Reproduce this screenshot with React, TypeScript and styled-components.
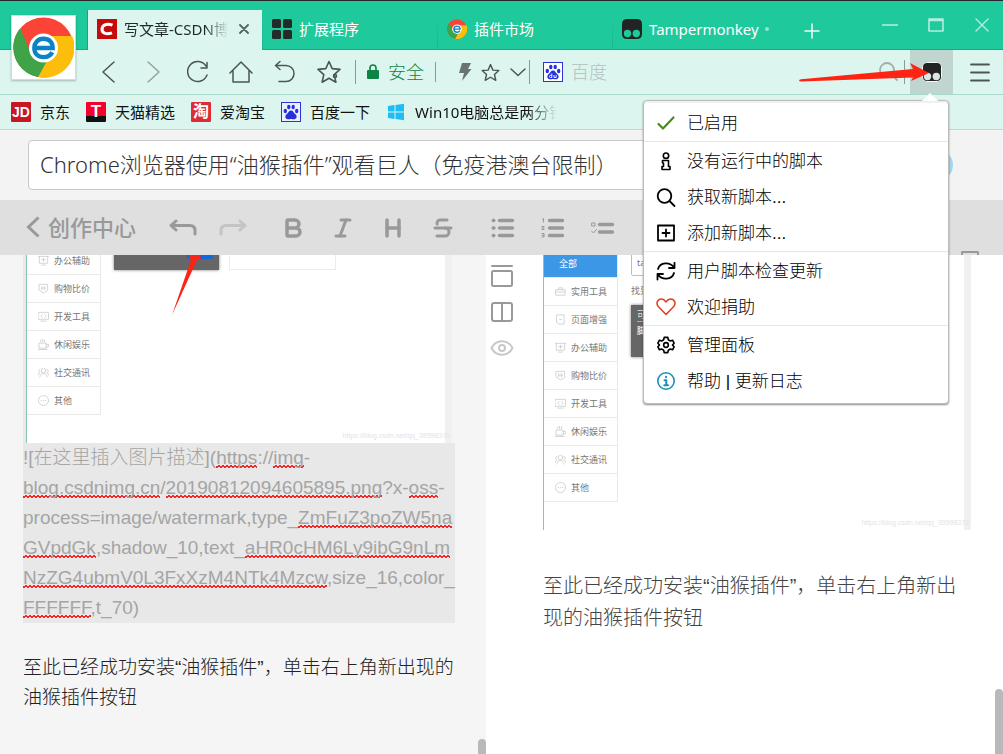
import React from 'react';
import styled, { createGlobalStyle, css } from 'styled-components';
import { Bold, Heading, Italic, Strikethrough } from 'lucide-react';

const GlobalStyle = createGlobalStyle`
  *, *::before, *::after { box-sizing: border-box; }
  body { margin: 0; font-family: "Noto Sans", "Noto Sans CJK SC", sans-serif; color: #111; background: #fff; }
  button { border: 0; padding: 0; background: none; color: inherit; font: inherit; cursor: pointer; }
  a { color: inherit; text-decoration: none; }
  p { margin: 0; }
  svg { display: block; flex: none; }
`;

/* ---------- browser frame ---------- */

const Page = styled.div`
  display: flex;
  flex-direction: column;
  min-height: 100vh;
  border-top: 1px solid #26282c;
  overflow: hidden;
`;

const Frame = styled.header`
  position: relative;
  z-index: 2;
`;

const Logo = styled.div`
  position: absolute;
  z-index: 1;
  left: 11px;
  top: 14px;
  padding: 1px;
  background: #fff;
  border: 1px solid #d3dedb;
  box-shadow: 0 1px 2px rgba(0, 0, 0, 0.25);
`;

const TabBar = styled.nav`
  display: flex;
  height: 49px;
  padding-left: 87px;
  background: #1ec99c;
  border-bottom: 1px solid #16a982;
`;

const Tab = styled.a<{ $active?: boolean }>`
  display: flex;
  align-items: center;
  gap: 7px;
  width: 175px;
  padding: 0 13px 2px 9px;
  margin-top: 9px;
  margin-bottom: -1px;
  font-size: 15px;
  line-height: 20px;
  white-space: nowrap;
  color: ${(p) => (p.$active ? '#1f2a27' : '#fff')};
  background: ${(p) => (p.$active ? '#dcf6ef' : 'transparent')};
  border-left: 1px solid ${(p) => (p.$active ? '#1aa37f' : 'transparent')};
  & + & { border-image: linear-gradient(transparent 20%, #18b48b) 1; border-width: 0 0 0 1px; border-style: solid; }
  & + &:nth-child(2) { border-image: none; border-color: transparent; }
`;

const Faded = styled.span<{ $width: number }>`
  width: ${(p) => p.$width}px;
  overflow: hidden;
  white-space: nowrap;
  mask-image: linear-gradient(to right, #000 78%, transparent);
`;

const TabClose = styled.button`
  display: flex;
  margin-left: auto;
  color: #53635e;
`;

const LoadDot = styled.i`
  width: 4px;
  height: 4px;
  margin-left: -1px;
  border-radius: 50%;
  background: #8fe5cd;
`;

const NewTab = styled.button`
  display: flex;
  align-items: center;
  justify-content: center;
  width: 50px;
  padding-top: 11px;
  color: #e9fbf6;
`;

const WindowControls = styled.div`
  display: flex;
  margin-left: auto;
`;

const WindowButton = styled.button`
  display: flex;
  align-items: center;
  justify-content: center;
  width: 46px;
  padding-left: 3px;
  color: #b4eedd;
`;

const NavBar = styled.div`
  display: flex;
  align-items: center;
  height: 45px;
  padding-left: 87px;
  background: #dcf6ef;
  border-bottom: 1px solid #a9d9cb;
`;

const NavGroup = styled.div`
  display: flex;
  padding-right: 4px;
`;

const NavButton = styled.button<{ $width?: number; $inset?: number }>`
  display: flex;
  align-items: center;
  justify-content: center;
  width: ${(p) => p.$width ?? 44}px;
  height: 44px;
  padding-left: ${(p) => p.$inset ?? 0}px;
  color: #4b5653;
  &:disabled { color: #93a39e; }
`;

const Divider = styled.i<{ $short?: boolean }>`
  width: 1px;
  height: ${(p) => (p.$short ? 20 : 24)}px;
  background: #8b9a95;
`;

const Security = styled.button`
  display: flex;
  align-items: center;
  justify-content: center;
  gap: 9px;
  width: 79px;
  color: #0d8345;
  font-size: 18px;
  font-weight: 300;
  line-height: 24px;
`;

const Search = styled.label`
  display: flex;
  flex: 1;
  align-items: center;
  gap: 8px;
  min-width: 0;
  padding: 0 6px 0 13px;
  color: #a3aeab;
`;

const SearchInput = styled.input`
  flex: 1;
  min-width: 0;
  padding: 0;
  border: 0;
  outline: 0;
  background: transparent;
  font: 300 18px/24px "Noto Sans", "Noto Sans CJK SC", sans-serif;
  &::placeholder { color: #b3bfbc; opacity: 1; }
`;

const Extension = styled.div`
  position: relative;
  margin-left: 5px;
  background: #c0d5cf;
`;

const PointerArrow = styled.svg`
  position: absolute;
  z-index: 4;
  right: 14px;
  top: 12px;
  pointer-events: none;
`;

const BookmarkBar = styled.nav`
  display: flex;
  align-items: center;
  gap: 16px;
  height: 35px;
  padding-left: 11px;
  background: #dcf6ef;
  border-bottom: 1px solid #b3ddd0;
`;

const Bookmark = styled.a`
  display: flex;
  align-items: center;
  gap: 9px;
  font-size: 15px;
  line-height: 20px;
  white-space: nowrap;
`;

const SiteBadge = styled.span<{ $bg: string; $size: number }>`
  display: flex;
  align-items: center;
  justify-content: center;
  width: 20px;
  height: 20px;
  border-radius: 1px;
  background: ${(p) => p.$bg};
  color: #fff;
  font: bold ${(p) => p.$size}px/20px "Liberation Sans", "Noto Sans CJK SC", sans-serif;
`;

/* ---------- extension menu ---------- */

const Menu = styled.div`
  position: absolute;
  z-index: 3;
  top: 50px;
  right: 4px;
  width: 306px;
  padding: 4px 0;
  background: #fff;
  border: 1px solid #bcbcbc;
  border-radius: 4px;
  box-shadow: 0 1px 2px rgba(0, 0, 0, 0.45), inset 0 2px 0 #f1f1f1;
  &::before {
    content: "";
    position: absolute;
    top: -8px;
    right: 10px;
    border: solid transparent;
    border-width: 0 8px 8px;
    border-bottom-color: #fff;
  }
`;

const MenuGroup = styled.div`
  & + & { padding-top: 1px; border-top: 1px solid #e6e6e6; }
`;

const MenuItem = styled.button`
  display: flex;
  align-items: center;
  gap: 11px;
  width: 100%;
  height: 36px;
  padding: 1px 0 0 12px;
  font: 300 17px/24px "Liberation Sans", "Noto Sans CJK SC", sans-serif;
  color: #000;
`;

/* ---------- article editor ---------- */

const TitleBar = styled.div`
  display: flex;
  align-items: center;
  height: 70px;
  padding: 0 50px 0 28px;
  background: #f3f3f3;
`;

const TitleInput = styled.input`
  flex: 1;
  min-width: 0;
  height: 50px;
  margin-right: 80px;
  padding: 0 11px 4px;
  border: 1px solid #c8c8c8;
  border-radius: 4px;
  outline: 0;
  background: #fff;
  color: #333;
  font: 300 22px/32px "Noto Sans", "Noto Sans CJK SC", sans-serif;
`;

const Avatar = styled.i`
  width: 32px;
  height: 32px;
  border-radius: 50%;
  background: #9fd8ef;
`;

const Toolbar = styled.div`
  display: flex;
  align-items: center;
  height: 55px;
  padding: 0 24px 0 26px;
  background: #dfdfdf;
  color: #999;
`;

const BackLink = styled.a`
  display: flex;
  align-items: center;
  gap: 8px;
  width: 132px;
  padding-bottom: 2px;
  font-size: 22px;
  font-weight: 500;
  line-height: 32px;
  white-space: nowrap;
`;

const ToolGroup = styled.div`
  display: flex;
  margin-right: 10px;
`;

const Tool = styled.button`
  display: flex;
  align-items: center;
  justify-content: center;
  width: 50px;
  height: 50px;
  &:disabled { color: #c4c4c4; }
`;

const PanelTab = styled.i`
  align-self: flex-end;
  width: 18px;
  height: 4px;
  margin-left: auto;
  border: 2px solid #999;
  border-bottom: 0;
  border-radius: 2px 2px 0 0;
`;

const Workspace = styled.main`
  display: grid;
  flex: 1;
  grid-template-columns: 486fr 517fr;
`;

const Pane = styled.section<{ $source?: boolean }>`
  position: relative;
  min-width: 0;
  ${(p) => p.$source ? css`
    padding-left: 23px;
    background: #f5f5f5;
  ` : css`
    display: flex;
    gap: 25px;
    padding-right: 32px;
    background: #fff;
  `}
`;

const ScrollThumb = styled.i<{ $height: number }>`
  position: absolute;
  right: 0;
  bottom: 0;
  width: 8px;
  height: ${(p) => p.$height}px;
  border-radius: 4px 4px 0 0;
  background: #b9b9b9;
`;

const SourceImage = styled.div`
  max-width: 429px;
  padding-left: 3px;
  background: #e8e8e8;
`;

const Markup = styled.p`
  width: max-content;
  background: #e8e8e8;
  color: #a5a5a5;
  font: 300 19px/30px "Liberation Sans", "Noto Sans CJK SC", sans-serif;
`;

const Line = styled.span`
  display: block;
  height: 30px;
  white-space: nowrap;
`;

const Misspelt = styled.span`
  background-image:
    linear-gradient(to right, #ee2a2a 50%, transparent 50%),
    linear-gradient(to right, transparent 50%, #ee2a2a 50%);
  background-size: 4px 2px;
  background-position: 0 100%, 0 calc(100% - 1px);
  background-repeat: repeat-x;
`;

const SourceText = styled.p`
  padding-top: 30px;
  color: #222;
  font: 300 19px/30px "Liberation Sans", "Noto Sans CJK SC", sans-serif;
`;

const SideTools = styled.div`
  display: flex;
  flex-direction: column;
  align-items: center;
  width: 32px;
  padding-top: 3px;
  color: #999;
`;

const SideButton = styled.button`
  display: flex;
  align-items: center;
  justify-content: center;
  width: 32px;
  height: 36px;
  &:last-child { color: #c8c8c8; }
`;

const Preview = styled.article`
  flex: 1;
  min-width: 0;
`;

const PreviewText = styled.p`
  padding-top: 40px;
  color: #444;
  font: 300 20px/32px "Liberation Sans", "Noto Sans CJK SC", sans-serif;
`;

/* ---------- picture of the script site ---------- */

const Shot = styled.div<{ $height: number }>`
  position: relative;
  display: flex;
  align-items: flex-end;
  height: ${(p) => p.$height}px;
  overflow: hidden;
  background: linear-gradient(to left, #f0f0f0 7px, #fff 7px);
  border-left: 1px solid #8cc4ae;
`;

const Categories = styled.ul`
  width: 74px;
  margin: 0 0 28px;
  padding: 0;
  list-style: none;
  border-right: 1px solid #e9e9e9;
`;

const Category = styled.li<{ $current?: boolean }>`
  display: flex;
  align-items: center;
  gap: 5px;
  height: 28px;
  padding-left: ${(p) => (p.$current ? 15 : 11)}px;
  border-bottom: 1px solid #e9e9e9;
  background: ${(p) => (p.$current ? '#3c97e6' : '#fff')};
  color: ${(p) => (p.$current ? '#fff' : '#777')};
  font-size: 9px;
  line-height: 12px;
  white-space: nowrap;
  svg { color: #ccc; }
`;

const Results = styled.div`
  display: flex;
  flex-direction: column;
  padding: 0 0 173px 13px;
  font-size: 9px;
  line-height: 18px;
  color: #777;
`;

const SiteSearch = styled.div`
  width: 180px;
  height: 26px;
  margin-bottom: 6px;
  padding: 4px 5px;
  border: 1px solid #94c8f3;
  border-radius: 2px;
  line-height: 16px;
`;

const Cards = styled.div`
  display: flex;
  gap: 10px;
  padding-top: 5px;
`;

const Card = styled.div<{ $dark?: boolean }>`
  display: flex;
  flex-direction: column;
  width: ${(p) => (p.$dark ? 105 : 107)}px;
  height: 52px;
  padding: 3px 5px 10px;
  line-height: 12px;
  color: #e0e0e0;
  background: ${(p) => (p.$dark ? '#666' : '#fff')};
  border: 1px solid ${(p) => (p.$dark ? '#666' : '#ececec')};
  box-shadow: ${(p) => (p.$dark ? '0 0 3px rgba(0,0,0,.5)' : 'none')};
`;

const CardTitle = styled.span`
  margin-bottom: 3px;
  border-bottom: 1px solid #aaa;
`;

const CardBar = styled.div`
  flex: none;
  align-self: flex-end;
  width: 26px;
  height: 10px;
  margin-top: auto;
  border-radius: 2px;
  background: #1467d8;
`;

const RedStroke = styled.svg`
  position: absolute;
  left: 143px;
  bottom: 127px;
`;

const Watermark = styled.span`
  position: absolute;
  right: 2px;
  bottom: 3px;
  color: #e4e4e4;
  font: 7px/9px "Liberation Sans", sans-serif;
`;

const Stroke = ({ size, box = size, w = 1, children }: { size: number; box?: number; w?: number; children: React.ReactNode }) => (
  <svg width={size} height={size} viewBox={`0 0 ${box} ${box}`} fill="none" stroke="currentColor" strokeWidth={w} strokeLinecap="round" strokeLinejoin="round" aria-hidden="true">
    {children}
  </svg>
);

const ChromeLogo = ({ size }: { size: number }) => (
  <svg width={size} height={size} viewBox="0 0 63 63" aria-hidden="true">
    <circle cx="31.5" cy="31.5" r="31" fill="#fb4338" />
    <path d="M61 19.500H31V32L44 38L26 62A31 31 0 0 0 61 19.500Z" fill="#fdbd0b" />
    <path d="M26 62L44 38L31 32L18 36L7.500 11.500A31 31 0 0 0 26 62Z" fill="#3fa447" />
    <path d="M26 62L38 40L45 38L33 61Z" fill="#fdbd0b" />
    <circle cx="31.5" cy="32" r="15" fill="#fff" />
    <path d="M21.500 32H41C41 25.500 37 22.500 31.500 22.500C25.500 22.500 22 27 22 32C22 38 26 41.500 31.500 41.500C36 41.500 39 39.500 40.500 36.500" fill="none" stroke="#0b84c6" strokeWidth="4.500" />
  </svg>
);

const BaiduPaw = ({ inverse }: { inverse?: boolean }) => (
  <svg width="20" height="20" viewBox="0 0 20 20" aria-hidden="true">
    <rect x=".5" y=".5" width="19" height="19" fill={inverse ? '#eef0ff' : '#fff'} stroke="#2a35dc" />
    <g fill="#2531dc">
      <ellipse cx="4.300" cy="9" rx="1.700" ry="2.200" />
      <ellipse cx="7.800" cy="5" rx="1.700" ry="2.300" />
      <ellipse cx="12.200" cy="5" rx="1.700" ry="2.300" />
      <ellipse cx="15.700" cy="9" rx="1.700" ry="2.200" />
      <path d="M10 8.500C7.800 8.500 7.500 10.700 5.800 12C3.500 13.900 4 17 6.800 17.200C8.300 17.300 8.800 16.900 10 16.900S11.700 17.300 13.200 17.200C16 17 16.500 13.900 14.200 12C12.500 10.700 12.200 8.500 10 8.500Z" />
    </g>
    {!inverse && <path d="M8.800 11.500V15.500H7.600A1.100 1.100 0 0 1 7.600 13.300H8.800M11 13V15.500H13.200V13" fill="none" stroke="#fff" strokeWidth=".9" />}
  </svg>
);

const Monkey = ({ eyes, outline }: { eyes: string; outline?: boolean }) => (
  <svg width="20" height="20" viewBox="0 0 20 20" aria-hidden="true">
    <rect x=".5" y=".5" width="19" height="19" rx="4" fill="#232323" stroke={outline ? '#f4f9f7' : '#232323'} />
    <circle cx="5.500" cy="14.500" r="3.700" fill={eyes} />
    <circle cx="14.300" cy="14.500" r="3.700" fill={eyes} />
  </svg>
);

const categories: { name: string; icon: React.ReactNode }[] = [
  { name: '实用工具', icon: <path d="M1 4H11V10H1ZM4 4V2H8V4M1 6.500H11" /> },
  { name: '页面增强', icon: <path d="M2 1H10V11H4L2 9ZM5 6H7" /> },
  { name: '办公辅助', icon: <path d="M.5 1.500H11.500M1.500 1.500V9H10.500V1.500M4 11H8M6 3.500V7M4 5H8" /> },
  { name: '购物比价', icon: <path d="M1.500 1.500H10.500V8L6 11L1.500 8ZM4 4V7.500M7 4V7.500M4 5.500H8.500" /> },
  { name: '开发工具', icon: <path d="M.5 1.500H11.500V9H.500ZM3 11H9M4.500 4L3 5.500L4.500 7M7.500 4L9 5.500L7.500 7" /> },
  { name: '休闲娱乐', icon: <path d="M1.500 4.500H9V10H1.500ZM9 6H11.500V8.500H9M0 11.500H10M3 1V3M5 0V3M7 1V3" /> },
  { name: '社交通讯', icon: <><circle cx="6" cy="4" r="2.500" /><path d="M2 11C2 5.500 10 5.500 10 11M2 2.500C0 3.500 1 6 2 6L0 9M10 2.500C12 3.500 11 6 10 6L12 9" /></> },
  { name: '其他', icon: <><circle cx="6" cy="6" r="5.500" /><path d="M3.500 6H4M6 6H6.200M8.200 6H8.500" /></> },
];

/* `scrolled` leaves out the rows that have moved above the upper edge */
const ScriptSite = ({ height, scrolled }: { height: number; scrolled?: boolean }) => (
  <Shot $height={height}>
    <Categories>
      {!scrolled && <Category $current>全部</Category>}
      {categories.slice(scrolled ? 2 : 0).map(({ name, icon }) => (
        <Category key={name}><Stroke size={11} box={12} w={0.9}>{icon}</Stroke>{name}</Category>
      ))}
    </Categories>
    <Results>
      {!scrolled && <SiteSearch>tamper</SiteSearch>}
      {!scrolled && <span>找到以下</span>}
      <Cards>
        <Card $dark>
          {!scrolled && <CardTitle>可以使用</CardTitle>}
          {!scrolled && <strong>脚本</strong>}
          <CardBar />
        </Card>
        <Card />
      </Cards>
    </Results>
    <RedStroke width="36" height="70" viewBox="0 0 36 70" aria-hidden="true">
      <path d="M2 69L21 14L19 10L29 0L31 14L27 14Z" fill="#fb2416" />
    </RedStroke>
    <Watermark>https://blog.csdn.net/qq_38598370</Watermark>
  </Shot>
);

const menuGroups: { label: string; icon: React.ReactNode }[][] = [
  [{ label: '已启用', icon: <g stroke="#4c8a1c"><path d="M2.500 10L7 14.500L17.500 3.500" strokeWidth="2.200" /></g> }],
  [
    { label: '没有运行中的脚本', icon: <g strokeWidth="1.600"><circle cx="10" cy="3.700" r="2.700" /><path d="M6.500 8.500H12.500V14.500H14V17.500H6V14.500H7.500V11H6.500Z" /></g> },
    { label: '获取新脚本...', icon: <><circle cx="8.500" cy="8" r="6.800" /><path d="M13.500 13L18.500 18" /></> },
    { label: '添加新脚本...', icon: <path d="M2 1.500H18V16.500H2ZM10 5.500V12.500M6.500 9H13.500" /> },
  ],
  [
    { label: '用户脚本检查更新', icon: <path d="M2 7C4 0 14 -.5 18 5.500M18.500 .8V6H13M18 11C16 18 6 18.500 2 12.500M1.500 17.500V12H7" /> },
    { label: '欢迎捐助', icon: <path stroke="#e23f22" strokeWidth="1.500" d="M10 16.500L2.500 8.700C-.5 5.500 1.500 1 5.500 1C8 1 9.200 2.800 10 4C10.800 2.800 12 1 14.500 1C18.500 1 20.500 5.500 17.500 8.700Z" /> },
  ],
  [
    { label: '管理面板', icon: <g transform="translate(1 0) scale(.9)"><circle cx="10" cy="10" r="2.600" /><path d="M8 1.500H12L12.600 4.200L14.800 5.500L17.300 4.700L19 8L17.200 10L19 12L17.300 15.300L14.800 14.500L12.600 15.800L12 18.500H8L7.400 15.800L5.200 14.500L2.700 15.300L1 12L2.800 10L1 8L2.700 4.700L5.200 5.500L7.400 4.200Z" /></g> },
    { label: '帮助 | 更新日志', icon: <g stroke="#1b8fb8"><circle cx="10" cy="9" r="8.200" strokeWidth="1.600" /><path d="M8.500 8.300H10.300V13M8.300 13.200H12M10 4.700V5.200" strokeWidth="2" /></g> },
  ],
];

const listRows = (marks: React.ReactNode, rows: number[]) => (
  <svg width="24" height="20" viewBox="0 0 24 20" fill="none" stroke="currentColor" strokeWidth="3.400" strokeLinecap="round" aria-hidden="true">
    {rows.map((y) => <path key={y} d={`M8.500 ${y}H21.500`} />)}
    <g strokeWidth="1">{marks}</g>
  </svg>
);

export default function App() {
  return (
    <Page>
      <GlobalStyle />
      <Frame>
        <Logo><ChromeLogo size={61} /></Logo>
        <TabBar>
          <Tab href="#write" $active>
            <svg width="20" height="20" viewBox="0 0 20 20" aria-hidden="true">
              <rect width="20" height="20" fill="#c60b0b" />
              <path d="M15.500 6.200C12 4.600 5.500 4.500 5 10C4.700 15 10.500 15.400 15 13.800" fill="none" stroke="#fff" strokeWidth="3" />
            </svg>
            <Faded $width={104}>写文章-CSDN博客</Faded>
            <TabClose aria-label="关闭标签页"><Stroke size={10} w={1.8}><path d="M1 1L9 9M9 1L1 9" /></Stroke></TabClose>
          </Tab>
          <Tab href="#extensions">
            <svg width="20" height="20" viewBox="0 0 20 20" fill="#232b29" aria-hidden="true">
              <rect width="9" height="9" rx="1.500" /><rect x="11" width="9" height="9" rx="1.500" />
              <rect y="11" width="9" height="9" rx="1.500" /><rect x="11" y="11" width="9" height="9" rx="1.500" />
            </svg>
            扩展程序
          </Tab>
          <Tab href="#market"><ChromeLogo size={20} />插件市场</Tab>
          <Tab href="#tampermonkey"><Monkey eyes="#1ec99c" />Tampermonkey<LoadDot /></Tab>
          <NewTab aria-label="新标签页"><Stroke size={16} w={1.6}><path d="M8 1V15M1 8H15" /></Stroke></NewTab>
          <WindowControls>
            <WindowButton aria-label="最小化"><Stroke size={16} w={1.4}><path d="M0 8H16" /></Stroke></WindowButton>
            <WindowButton aria-label="最大化"><Stroke size={16} w={1.6}><path d="M1 2H15V14H1ZM1 3.500H15" /></Stroke></WindowButton>
            <WindowButton aria-label="关闭"><Stroke size={16} w={1.4}><path d="M2 2L14 14M14 2L2 14" /></Stroke></WindowButton>
          </WindowControls>
        </TabBar>

        <NavBar>
          <NavGroup>
            <NavButton aria-label="后退"><Stroke size={24} w={1.5}><path d="M17 2L6 12L17 22" /></Stroke></NavButton>
            <NavButton aria-label="前进" disabled><Stroke size={24} w={1.5}><path d="M7 2L18 12L7 22" /></Stroke></NavButton>
            <NavButton aria-label="刷新"><Stroke size={24} w={1.5}><path d="M21 6A10 10 0 1 0 22 15M22 2.500V8H16" /></Stroke></NavButton>
            <NavButton aria-label="主页"><Stroke size={24} w={1.5}><path d="M1 13L12 2L23 13M4 11V22H20V11" /></Stroke></NavButton>
            <NavButton aria-label="撤销"><Stroke size={24} w={1.5}><path d="M7 1.500L2.500 5.500L7 9.500M2.500 5.500H13A8 8 0 0 1 13 21.500H6" /></Stroke></NavButton>
            <NavButton aria-label="收藏夹"><Stroke size={24} w={1.600}><path d="M12 1.500L15.200 8.600L23 9.400L17.200 14.600L18.900 22.200L12 18.300L5.100 22.200L6.800 14.600L1 9.400L8.800 8.600Z" /><circle cx="18" cy="16" r="1.500" /></Stroke></NavButton>
          </NavGroup>
          <Divider />
          <Security>
            <svg width="12" height="16" viewBox="0 0 12 16" aria-hidden="true">
              <rect y="6" width="12" height="9" rx="1" fill="currentColor" />
              <path d="M3 7V4A3 3 0 0 1 9 4V7" fill="none" stroke="currentColor" strokeWidth="1.600" />
            </svg>
            安全
          </Security>
          <Divider $short />
          <NavButton $width={42} $inset={16} aria-label="极速模式">
            <svg width="14" height="18" viewBox="0 0 14 18" fill="#69736f" aria-hidden="true"><path d="M4 0H13L10 6H13.500L4 18L6 10H1Z" /></svg>
          </NavButton>
          <NavButton $width={24} aria-label="收藏"><Stroke size={19} box={24} w={1.8}><path d="M12 2L15 9L22.500 9.500L17 14.500L18.700 21.800L12 18L5.300 21.800L7 14.500L1.500 9.500L9 9Z" /></Stroke></NavButton>
          <NavButton $width={27} $inset={4} aria-label="展开"><Stroke size={16} w={1.5}><path d="M1 5L8 11.500L15 5" /></Stroke></NavButton>
          <Divider />
          <Search>
            <BaiduPaw />
            <SearchInput placeholder="百度" aria-label="搜索" />
            <Stroke size={20} w={1.8}><circle cx="9" cy="8" r="7" /><path d="M14 13L19 18" /></Stroke>
          </Search>
          <Divider />
          <Extension>
            <NavButton $width={43} aria-label="Tampermonkey" aria-expanded="true"><Monkey eyes="#dbe6e2" outline /></NavButton>
            <PointerArrow width="140" height="22" viewBox="0 0 140 22" aria-hidden="true">
              <path d="M0 19Q0 17.500 2 17.200L114 7L111 1L130 11L112 19L114 15.500L2 19.500Z" fill="#fe2414" />
            </PointerArrow>
            <Menu role="menu">
              {menuGroups.map((group) => (
                <MenuGroup key={group[0].label}>
                  {group.map((item) => (
                    <MenuItem key={item.label} role="menuitem"><Stroke size={20} w={1.8}>{item.icon}</Stroke>{item.label}</MenuItem>
                  ))}
                </MenuGroup>
              ))}
            </Menu>
          </Extension>
          <NavButton $width={50} $inset={4} aria-label="菜单"><Stroke size={20} w={1.8}><path d="M1 2.500H19M1 10.500H19M1 18.500H19" /></Stroke></NavButton>
        </NavBar>

        <BookmarkBar>
          <Bookmark href="#jd"><SiteBadge $bg="#c81623" $size={14}>JD</SiteBadge>京东</Bookmark>
          <Bookmark href="#tmall"><SiteBadge $bg="linear-gradient(#f5002d 70%, #111 70%)" $size={17}>T</SiteBadge>天猫精选</Bookmark>
          <Bookmark href="#taobao"><SiteBadge $bg="#dc2c36" $size={16}>淘</SiteBadge>爱淘宝</Bookmark>
          <Bookmark href="#baidu"><BaiduPaw inverse />百度一下</Bookmark>
          <Bookmark href="#win10">
            <svg width="20" height="20" viewBox="0 0 20 20" fill="#1fbdf5" aria-hidden="true">
              <path d="M2 4L8.500 3V9.500H2ZM9.500 2.900L18 1.700V9.500H9.500ZM2 10.500H8.500V17L2 16ZM9.500 10.500H18V18.300L9.500 17.100Z" />
            </svg>
            <Faded $width={142}>Win10电脑总是两分钟</Faded>
          </Bookmark>
        </BookmarkBar>
      </Frame>

      <TitleBar>
        <TitleInput aria-label="文章标题" defaultValue="Chrome浏览器使用“油猴插件”观看巨人（免疫港澳台限制）" />
        <Avatar />
      </TitleBar>

      <Toolbar>
        <BackLink href="#creator">
          <svg width="14" height="22" viewBox="0 0 14 22" fill="none" stroke="currentColor" strokeWidth="3" aria-hidden="true"><path d="M12.500 1.500L2.500 11L12.500 20.500" /></svg>
          创作中心
        </BackLink>
        <ToolGroup>
          <Tool aria-label="撤销"><Stroke size={28} w={3}><path d="M7 7L2 11.500L7 16M3 11.500H21Q26 11.500 26 16.500V20" /></Stroke></Tool>
          <Tool aria-label="重做" disabled><Stroke size={28} w={3}><path d="M21 7L26 11.500L21 16M25 11.500H7Q2 11.500 2 16.500V20" /></Stroke></Tool>
        </ToolGroup>
        <ToolGroup>
          <Tool aria-label="加粗"><Bold size={24} strokeWidth={3.5} /></Tool>
          <Tool aria-label="斜体"><Italic size={24} strokeWidth={3} /></Tool>
          <Tool aria-label="标题"><Heading size={24} strokeWidth={3.5} /></Tool>
          <Tool aria-label="删除线"><Strikethrough size={24} strokeWidth={3} /></Tool>
        </ToolGroup>
        <ToolGroup>
          <Tool aria-label="无序列表">
            {listRows(<g fill="currentColor"><circle cx="2.500" cy="2.500" r="1.500" /><circle cx="2.500" cy="10" r="1.500" /><circle cx="2.500" cy="17.500" r="1.500" /></g>, [2.5, 10, 17.5])}
          </Tool>
          <Tool aria-label="有序列表">
            {listRows(<path d="M1.500 1.200L2.500 .5V4M1 8.500H3V10H1V11.500H3M1 15.500H3V19H1M1 17.200H3" />, [2.5, 10, 17.5])}
          </Tool>
          <Tool aria-label="任务列表">
            {listRows(<path d="M1 5H4V8H1ZM.5 13L2.500 15L5.500 11.500" />, [6.5, 14])}
          </Tool>
        </ToolGroup>
        <PanelTab />
      </Toolbar>

      <Workspace>
        <Pane $source>
          <SourceImage><ScriptSite height={188} scrolled /></SourceImage>
          <Markup>
            <Line>![在这里插入图片描述](<Misspelt>https</Misspelt>://<Misspelt>img</Misspelt>-</Line>
            <Line><Misspelt>blog.csdnimg.cn</Misspelt>/<Misspelt>20190812094605895.png</Misspelt>?x-<Misspelt>oss</Misspelt>-</Line>
            <Line>process=image/watermark,type_<Misspelt>ZmFuZ3poZW5na</Misspelt></Line>
            <Line><Misspelt>GVpdGk</Misspelt>,shadow_10,text_<Misspelt>aHR0cHM6Ly9ibG9nLm</Misspelt></Line>
            <Line><Misspelt>NzZG4ubmV0L3FxXzM4NTk4Mzcw</Misspelt>,size_16,color_</Line>
            <Line><Misspelt>FFFFFF</Misspelt>,t_70)</Line>
          </Markup>
          <SourceText>
            <Line>至此已经成功安装“油猴插件”，单击右上角新出现的</Line>
            <Line>油猴插件按钮</Line>
          </SourceText>
          <ScrollThumb $height={15} />
        </Pane>
        <Pane>
          <SideTools>
            <SideButton aria-label="仅编辑"><Stroke size={24} w={2}><path d="M2 2H22" /><rect x="2" y="7" width="20" height="15" rx="1.500" /></Stroke></SideButton>
            <SideButton aria-label="分栏"><Stroke size={24} w={2}><rect x="2" y="3" width="20" height="18" rx="2" /><path d="M12 3V21" /></Stroke></SideButton>
            <SideButton aria-label="预览"><Stroke size={24} w={2}><path d="M1.500 12C6 3 18 3 22.500 12C18 21 6 21 1.500 12Z" /><circle cx="12" cy="12" r="3" /></Stroke></SideButton>
          </SideTools>
          <Preview>
            <ScriptSite height={275} />
            <PreviewText>至此已经成功安装“油猴插件”，单击右上角新出现的油猴插件按钮</PreviewText>
          </Preview>
          <ScrollThumb $height={65} />
        </Pane>
      </Workspace>
    </Page>
  );
}
